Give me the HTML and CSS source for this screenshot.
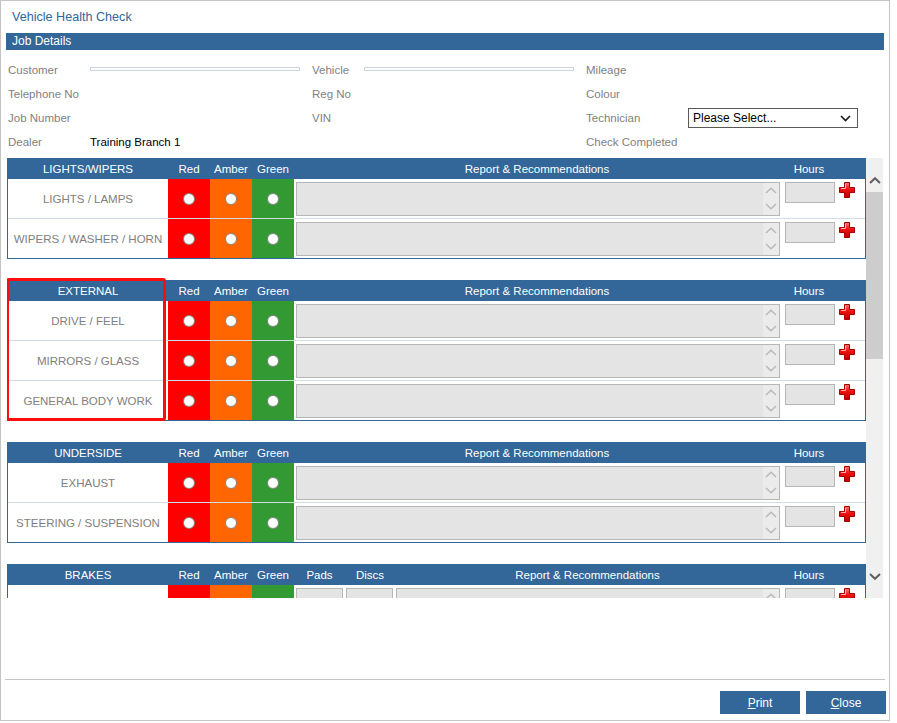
FILE: index.html
```html
<!DOCTYPE html>
<html lang="en">
<head>
<meta charset="utf-8">
<title>Vehicle Health Check</title>
<link rel="stylesheet" href="styles.css">
</head>
<body>
<svg class="defs" width="0" height="0" aria-hidden="true">
  <defs>
    <linearGradient id="plusGrad" x1="0" y1="0" x2="0" y2="1">
      <stop offset="0" stop-color="#ff7a7a"/>
      <stop offset="0.45" stop-color="#f01010"/>
      <stop offset="1" stop-color="#c00000"/>
    </linearGradient>
  </defs>
</svg>
<div class="window">
  <div class="title">Vehicle Health Check</div>
  <div class="bar">Job Details</div>

  <div class="details">
    <span class="lbl">Customer</span><span class="val"><span class="empty"></span></span>
    <span class="lbl">Vehicle</span><span class="val"><span class="empty"></span></span>
    <span class="lbl">Mileage</span><span class="val"></span>

    <span class="lbl">Telephone No</span><span class="val"></span>
    <span class="lbl">Reg No</span><span class="val"></span>
    <span class="lbl">Colour</span><span class="val"></span>

    <span class="lbl">Job Number</span><span class="val"></span>
    <span class="lbl">VIN</span><span class="val"></span>
    <span class="lbl">Technician</span>
    <span class="val">
      <span class="select">Please Select...
        <svg class="sel-chev" width="11" height="7" viewBox="0 0 11 7"><polyline points="1,1 5.5,5.5 10,1" fill="none" stroke="#1a1a1a" stroke-width="1.6"/></svg>
      </span>
    </span>

    <span class="lbl">Dealer</span><span class="val dark">Training Branch 1</span>
    <span class="lbl"></span><span class="val"></span>
    <span class="lbl">Check Completed</span><span class="val"></span>
  </div>

  <div class="scroller">
    <div class="viewport">

      <section class="sec">
        <div class="hd">
          <span class="c-name">LIGHTS/WIPERS</span>
          <span class="rag">Red</span><span class="rag">Amber</span><span class="rag">Green</span>
          <span class="c-report">Report &amp; Recommendations</span>
          <span class="c-hours">Hours</span><span class="c-add"></span>
        </div>
        <div class="row">
          <div class="c-name">LIGHTS / LAMPS</div>
          <div class="rag red"><span class="radio"></span></div>
          <div class="rag amber"><span class="radio"></span></div>
          <div class="rag green"><span class="radio"></span></div>
          <div class="c-report"><div class="ta"><div class="spin"><svg width="12" height="7" viewBox="0 0 12 7"><polyline points="1,6 6,1.2 11,6" fill="none" stroke="#b9b9b9" stroke-width="1.5"/></svg><svg width="12" height="7" viewBox="0 0 12 7"><polyline points="1,1 6,5.8 11,1" fill="none" stroke="#b9b9b9" stroke-width="1.5"/></svg></div></div></div>
          <div class="c-hours"><div class="box hrs"></div></div>
          <div class="c-add"><svg class="plus" width="18" height="18" viewBox="0 0 18 18"><path d="M6.5 1.5h5v5h5v5h-5v5h-5v-5h-5v-5h5z" fill="url(#plusGrad)" stroke="#a30000" stroke-width="1" stroke-linejoin="round"/><path d="M7.5 3v4.5H3" fill="none" stroke="#ffb3b3" stroke-width="1"/></svg></div>
        </div>
        <div class="row">
          <div class="c-name">WIPERS / WASHER / HORN</div>
          <div class="rag red"><span class="radio"></span></div>
          <div class="rag amber"><span class="radio"></span></div>
          <div class="rag green"><span class="radio"></span></div>
          <div class="c-report"><div class="ta"><div class="spin"><svg width="12" height="7" viewBox="0 0 12 7"><polyline points="1,6 6,1.2 11,6" fill="none" stroke="#b9b9b9" stroke-width="1.5"/></svg><svg width="12" height="7" viewBox="0 0 12 7"><polyline points="1,1 6,5.8 11,1" fill="none" stroke="#b9b9b9" stroke-width="1.5"/></svg></div></div></div>
          <div class="c-hours"><div class="box hrs"></div></div>
          <div class="c-add"><svg class="plus" width="18" height="18" viewBox="0 0 18 18"><path d="M6.5 1.5h5v5h5v5h-5v5h-5v-5h-5v-5h5z" fill="url(#plusGrad)" stroke="#a30000" stroke-width="1" stroke-linejoin="round"/><path d="M7.5 3v4.5H3" fill="none" stroke="#ffb3b3" stroke-width="1"/></svg></div>
        </div>
      </section>

      <section class="sec">
        <div class="highlight"></div>
        <div class="hd">
          <span class="c-name">EXTERNAL</span>
          <span class="rag">Red</span><span class="rag">Amber</span><span class="rag">Green</span>
          <span class="c-report">Report &amp; Recommendations</span>
          <span class="c-hours">Hours</span><span class="c-add"></span>
        </div>
        <div class="row">
          <div class="c-name">DRIVE / FEEL</div>
          <div class="rag red"><span class="radio"></span></div>
          <div class="rag amber"><span class="radio"></span></div>
          <div class="rag green"><span class="radio"></span></div>
          <div class="c-report"><div class="ta"><div class="spin"><svg width="12" height="7" viewBox="0 0 12 7"><polyline points="1,6 6,1.2 11,6" fill="none" stroke="#b9b9b9" stroke-width="1.5"/></svg><svg width="12" height="7" viewBox="0 0 12 7"><polyline points="1,1 6,5.8 11,1" fill="none" stroke="#b9b9b9" stroke-width="1.5"/></svg></div></div></div>
          <div class="c-hours"><div class="box hrs"></div></div>
          <div class="c-add"><svg class="plus" width="18" height="18" viewBox="0 0 18 18"><path d="M6.5 1.5h5v5h5v5h-5v5h-5v-5h-5v-5h5z" fill="url(#plusGrad)" stroke="#a30000" stroke-width="1" stroke-linejoin="round"/><path d="M7.5 3v4.5H3" fill="none" stroke="#ffb3b3" stroke-width="1"/></svg></div>
        </div>
        <div class="row">
          <div class="c-name">MIRRORS / GLASS</div>
          <div class="rag red"><span class="radio"></span></div>
          <div class="rag amber"><span class="radio"></span></div>
          <div class="rag green"><span class="radio"></span></div>
          <div class="c-report"><div class="ta"><div class="spin"><svg width="12" height="7" viewBox="0 0 12 7"><polyline points="1,6 6,1.2 11,6" fill="none" stroke="#b9b9b9" stroke-width="1.5"/></svg><svg width="12" height="7" viewBox="0 0 12 7"><polyline points="1,1 6,5.8 11,1" fill="none" stroke="#b9b9b9" stroke-width="1.5"/></svg></div></div></div>
          <div class="c-hours"><div class="box hrs"></div></div>
          <div class="c-add"><svg class="plus" width="18" height="18" viewBox="0 0 18 18"><path d="M6.5 1.5h5v5h5v5h-5v5h-5v-5h-5v-5h5z" fill="url(#plusGrad)" stroke="#a30000" stroke-width="1" stroke-linejoin="round"/><path d="M7.5 3v4.5H3" fill="none" stroke="#ffb3b3" stroke-width="1"/></svg></div>
        </div>
        <div class="row">
          <div class="c-name">GENERAL BODY WORK</div>
          <div class="rag red"><span class="radio"></span></div>
          <div class="rag amber"><span class="radio"></span></div>
          <div class="rag green"><span class="radio"></span></div>
          <div class="c-report"><div class="ta"><div class="spin"><svg width="12" height="7" viewBox="0 0 12 7"><polyline points="1,6 6,1.2 11,6" fill="none" stroke="#b9b9b9" stroke-width="1.5"/></svg><svg width="12" height="7" viewBox="0 0 12 7"><polyline points="1,1 6,5.8 11,1" fill="none" stroke="#b9b9b9" stroke-width="1.5"/></svg></div></div></div>
          <div class="c-hours"><div class="box hrs"></div></div>
          <div class="c-add"><svg class="plus" width="18" height="18" viewBox="0 0 18 18"><path d="M6.5 1.5h5v5h5v5h-5v5h-5v-5h-5v-5h5z" fill="url(#plusGrad)" stroke="#a30000" stroke-width="1" stroke-linejoin="round"/><path d="M7.5 3v4.5H3" fill="none" stroke="#ffb3b3" stroke-width="1"/></svg></div>
        </div>
      </section>

      <section class="sec">
        <div class="hd">
          <span class="c-name">UNDERSIDE</span>
          <span class="rag">Red</span><span class="rag">Amber</span><span class="rag">Green</span>
          <span class="c-report">Report &amp; Recommendations</span>
          <span class="c-hours">Hours</span><span class="c-add"></span>
        </div>
        <div class="row">
          <div class="c-name">EXHAUST</div>
          <div class="rag red"><span class="radio"></span></div>
          <div class="rag amber"><span class="radio"></span></div>
          <div class="rag green"><span class="radio"></span></div>
          <div class="c-report"><div class="ta"><div class="spin"><svg width="12" height="7" viewBox="0 0 12 7"><polyline points="1,6 6,1.2 11,6" fill="none" stroke="#b9b9b9" stroke-width="1.5"/></svg><svg width="12" height="7" viewBox="0 0 12 7"><polyline points="1,1 6,5.8 11,1" fill="none" stroke="#b9b9b9" stroke-width="1.5"/></svg></div></div></div>
          <div class="c-hours"><div class="box hrs"></div></div>
          <div class="c-add"><svg class="plus" width="18" height="18" viewBox="0 0 18 18"><path d="M6.5 1.5h5v5h5v5h-5v5h-5v-5h-5v-5h5z" fill="url(#plusGrad)" stroke="#a30000" stroke-width="1" stroke-linejoin="round"/><path d="M7.5 3v4.5H3" fill="none" stroke="#ffb3b3" stroke-width="1"/></svg></div>
        </div>
        <div class="row">
          <div class="c-name">STEERING / SUSPENSION</div>
          <div class="rag red"><span class="radio"></span></div>
          <div class="rag amber"><span class="radio"></span></div>
          <div class="rag green"><span class="radio"></span></div>
          <div class="c-report"><div class="ta"><div class="spin"><svg width="12" height="7" viewBox="0 0 12 7"><polyline points="1,6 6,1.2 11,6" fill="none" stroke="#b9b9b9" stroke-width="1.5"/></svg><svg width="12" height="7" viewBox="0 0 12 7"><polyline points="1,1 6,5.8 11,1" fill="none" stroke="#b9b9b9" stroke-width="1.5"/></svg></div></div></div>
          <div class="c-hours"><div class="box hrs"></div></div>
          <div class="c-add"><svg class="plus" width="18" height="18" viewBox="0 0 18 18"><path d="M6.5 1.5h5v5h5v5h-5v5h-5v-5h-5v-5h5z" fill="url(#plusGrad)" stroke="#a30000" stroke-width="1" stroke-linejoin="round"/><path d="M7.5 3v4.5H3" fill="none" stroke="#ffb3b3" stroke-width="1"/></svg></div>
        </div>
      </section>

      <section class="sec brakes">
        <div class="hd">
          <span class="c-name">BRAKES</span>
          <span class="rag">Red</span><span class="rag">Amber</span><span class="rag">Green</span>
          <span class="c-pads">Pads</span><span class="c-discs">Discs</span>
          <span class="c-report">Report &amp; Recommendations</span>
          <span class="c-hours">Hours</span><span class="c-add"></span>
        </div>
        <div class="row">
          <div class="c-name"></div>
          <div class="rag red"><span class="radio"></span></div>
          <div class="rag amber"><span class="radio"></span></div>
          <div class="rag green"><span class="radio"></span></div>
          <div class="c-pads"><div class="box pd"></div></div>
          <div class="c-discs"><div class="box pd"></div></div>
          <div class="c-report"><div class="ta"><div class="spin"><svg width="12" height="7" viewBox="0 0 12 7"><polyline points="1,6 6,1.2 11,6" fill="none" stroke="#b9b9b9" stroke-width="1.5"/></svg><svg width="12" height="7" viewBox="0 0 12 7"><polyline points="1,1 6,5.8 11,1" fill="none" stroke="#b9b9b9" stroke-width="1.5"/></svg></div></div></div>
          <div class="c-hours"><div class="box hrs"></div></div>
          <div class="c-add"><svg class="plus" width="18" height="18" viewBox="0 0 18 18"><path d="M6.5 1.5h5v5h5v5h-5v5h-5v-5h-5v-5h5z" fill="url(#plusGrad)" stroke="#a30000" stroke-width="1" stroke-linejoin="round"/><path d="M7.5 3v4.5H3" fill="none" stroke="#ffb3b3" stroke-width="1"/></svg></div>
        </div>
      </section>

    </div>
    <div class="vscroll">
      <div class="sb-btn up"><svg width="12" height="7" viewBox="0 0 12 7"><polyline points="1,6 6,1.2 11,6" fill="none" stroke="#5f5f5f" stroke-width="2"/></svg></div>
      <div class="sb-thumb"></div>
      <div class="sb-track"></div>
      <div class="sb-btn down"><svg width="12" height="7" viewBox="0 0 12 7"><polyline points="1,1 6,5.8 11,1" fill="none" stroke="#5f5f5f" stroke-width="2"/></svg></div>
    </div>
  </div>

  <div class="sep"></div>
  <div class="buttons">
    <button class="btn"><u>P</u>rint</button>
    <button class="btn"><u>C</u>lose</button>
  </div>
</div>
</body>
</html>
```

FILE: styles.css
```css
html, body {
  margin: 0;
  padding: 0;
  background: #ffffff;
}

body {
  font-family: "Liberation Sans", Arial, sans-serif;
  font-size: 11.5px;
  color: #7f7f7f;
}

.defs {
  display: block;
  width: 0;
  height: 0;
  overflow: hidden;
}

.window {
  width: 890px;
  height: 721px;
  box-sizing: border-box;
  border: 1px solid #c4c4c4;
  padding: 0 5px;
  display: flex;
  flex-direction: column;
}

.title {
  height: 32px;
  display: flex;
  align-items: center;
  padding: 0 0 1px 6px;
  box-sizing: border-box;
  font-size: 12.6px;
  color: #336699;
}

.bar {
  height: 17px;
  line-height: 17px;
  background: #336699;
  color: #ffffff;
  padding-left: 6px;
  font-size: 12px;
}

.details {
  margin: 8px 0 0 2px;
  display: grid;
  grid-template-columns: 82px 222px 52px 222px 102px 1fr;
  grid-auto-rows: 24px;
  align-items: center;
}

.val.dark {
  color: #000000;
}

.empty {
  display: block;
  width: 208px;
  height: 2px;
  border: 1px solid #cdd4e0;
  margin-top: -2px;
}

.select {
  display: flex;
  align-items: center;
  justify-content: space-between;
  width: 170px;
  height: 20px;
  box-sizing: border-box;
  border: 1px solid #5a5a5a;
  padding: 0 6px 0 4px;
  color: #000000;
  font-size: 12px;
}

.sel-chev {
  display: block;
}

/* scroll area */
.scroller {
  margin: 4px 0 0 1px;
  height: 440px;
  display: flex;
}

.viewport {
  width: 859px;
  overflow: hidden;
}

.sec {
  position: relative;
  border: 1px solid #336699;
  margin-bottom: 21px;
}

.hd {
  height: 20px;
  background: #336699;
  color: #ffffff;
  display: flex;
  align-items: center;
}

.hd > span {
  text-align: center;
  white-space: nowrap;
}

.c-name {
  width: 160px;
  flex: none;
  text-align: center;
}

.rag {
  width: 42px;
  flex: none;
}

.c-report {
  width: 486px;
  flex: none;
}

.brakes .c-report {
  width: 385px;
}

.c-pads {
  width: 51px;
  flex: none;
}

.c-discs {
  width: 50px;
  flex: none;
}

.c-hours {
  width: 58px;
  flex: none;
}

.c-add {
  flex: 1;
}

.row {
  height: 40px;
  box-sizing: border-box;
  display: flex;
  border-bottom: 1px solid #d3dbe6;
}

.row:last-child {
  height: 39px;
  border-bottom: none;
}

.row .c-name {
  align-self: center;
  color: #808080;
}

.row .rag {
  display: flex;
  align-items: center;
  justify-content: center;
}

.red { background: #ff0000; }
.amber { background: #ff6600; }
.green { background: #339933; }

.radio {
  width: 12px;
  height: 12px;
  box-sizing: border-box;
  border-radius: 50%;
  border: 1px solid #8a8a8a;
  background: radial-gradient(circle at 50% 40%, #ffffff 55%, #f0f0f0 100%);
}

.row .c-report {
  padding: 3px 0 0 2px;
  box-sizing: border-box;
}

.brakes .row .c-report {
  padding-left: 1px;
}

.ta {
  height: 34px;
  box-sizing: border-box;
  border: 1px solid #b6b6b6;
  background: #e4e4e4;
  display: flex;
  justify-content: flex-end;
}

.spin {
  width: 16px;
  background: #ebebeb;
  display: flex;
  flex-direction: column;
  justify-content: space-between;
  align-items: center;
  padding: 4px 0 5px;
  box-sizing: border-box;
}

.spin svg {
  display: block;
}

.box {
  height: 21px;
  box-sizing: border-box;
  border: 1px solid #b6b6b6;
  background: #e4e4e4;
}

.row .c-hours {
  padding: 3px 0 0 5px;
  box-sizing: border-box;
}

.hrs {
  width: 50px;
}

.row .c-pads {
  padding: 3px 0 0 2px;
  box-sizing: border-box;
}

.row .c-discs {
  padding: 3px 0 0 1px;
  box-sizing: border-box;
}

.pd {
  width: 47px;
}

.row .c-add {
  padding: 2px 0 0 0;
}

.plus {
  display: block;
}

.highlight {
  position: absolute;
  left: -2px;
  top: -3px;
  width: 160px;
  height: 143px;
  box-sizing: border-box;
  border: 3px solid #ff0d0d;
  border-radius: 3px;
  z-index: 2;
}

/* fake vertical scrollbar */
.vscroll {
  width: 17px;
  background: #f0f0f0;
  display: flex;
  flex-direction: column;
}

.sb-btn {
  height: 34px;
  display: flex;
  justify-content: center;
}

.sb-btn svg {
  display: block;
}

.sb-btn.up {
  align-items: flex-end;
  padding-bottom: 8px;
  box-sizing: border-box;
}

.sb-btn.down {
  align-items: flex-start;
  padding-top: 9px;
  box-sizing: border-box;
}

.sb-thumb {
  height: 167px;
  background: #cdcdcd;
}

.sb-track {
  flex: 1;
}

/* footer */
.sep {
  margin: 81px -1px 0;
  height: 1px;
  background: #c6c6c6;
}

.buttons {
  margin: 11px -2px 0 0;
  display: flex;
  justify-content: flex-end;
  gap: 6px;
}

.btn {
  width: 80px;
  height: 23px;
  border: none;
  background: #336699;
  color: #ffffff;
  font-family: "Liberation Sans", Arial, sans-serif;
  font-size: 12px;
  padding: 0;
}
```
